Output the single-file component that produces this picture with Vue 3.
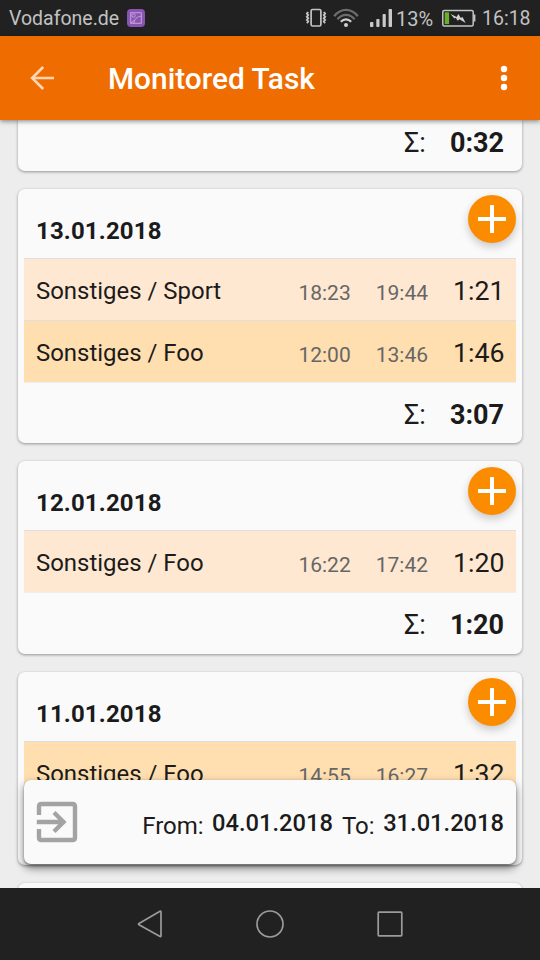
<script setup>
const days = [
  {
    date: '13.01.2018',
    total: '3:07',
    entries: [
      { name: 'Sonstiges / Sport', start: '18:23', end: '19:44', duration: '1:21', tone: 'peach' },
      { name: 'Sonstiges / Foo', start: '12:00', end: '13:46', duration: '1:46', tone: 'amber' }
    ]
  },
  {
    date: '12.01.2018',
    total: '1:20',
    entries: [
      { name: 'Sonstiges / Foo', start: '16:22', end: '17:42', duration: '1:20', tone: 'peach' }
    ]
  },
  {
    date: '11.01.2018',
    total: null,
    entries: [
      { name: 'Sonstiges / Foo', start: '14:55', end: '16:27', duration: '1:32', tone: 'amber' }
    ]
  }
]
</script>

<template>
  <div class="screen">
    <header class="status">
      <span class="carrier">Vodafone.de</span>
      <svg class="note" width="18" height="18" viewBox="0 0 18 18">
        <rect width="18" height="18" rx="4" fill="#8a54b4" />
        <g fill="none" stroke="#c3a5d8" stroke-width="1">
          <rect x="3.7" y="3.7" width="10.6" height="10.6" />
          <circle cx="6.5" cy="6.5" r="1.7" />
          <path d="M4 13.8 8 11M7 14c.5-4 3-6.5 7-6.7" />
        </g>
      </svg>
      <svg class="vibrate" width="22" height="20" viewBox="0 0 22 20" fill="none" stroke="#c4c4c4">
        <rect x="6.1" y="1.5" width="9.8" height="16.5" rx="1.5" stroke-width="1.7" />
        <path d="M3.2 4 1.9 5.5l1.3 1.6-1.3 1.6 1.3 1.6-1.3 1.6 1.3 1.6-1.3 1.6M18.8 4l1.3 1.5-1.3 1.6 1.3 1.6-1.3 1.6 1.3 1.6-1.3 1.6 1.3 1.6" stroke-width="1.9" />
      </svg>
      <svg class="wifi" width="26" height="20" viewBox="0 0 26 20" fill="none" stroke-width="2.2">
        <path d="M1.2 8.2C8-.2 18-.2 24.8 8.2" stroke="#6d6d6d" />
        <path d="M4.4 11.2c5-5.8 12.2-5.8 17.2 0" stroke="#6d6d6d" />
        <path d="M7.8 13.8c3.2-3.3 7.2-3.3 10.4 0" stroke="#d0d0d0" />
        <circle cx="13" cy="17" r="2" fill="#d0d0d0" />
      </svg>
      <svg class="signal" width="22" height="20" viewBox="0 0 22 20" fill="#c9c9c9">
        <rect y="14" width="3.4" height="5" rx=".8" />
        <rect x="6.3" y="11" width="3.2" height="8" rx=".8" />
        <rect x="12.6" y="6" width="3.2" height="13" rx=".8" />
        <rect x="18.6" y="1" width="3.4" height="18" rx=".8" />
      </svg>
      <span class="percent">13%</span>
      <svg class="battery" width="34" height="18" viewBox="0 0 34 18">
        <rect x=".8" y="1.4" width="30.4" height="15.6" rx="1.5" fill="none" stroke="#c4c4c4" stroke-width="1.5" />
        <path d="M32 5.500h1.400v7H32z" fill="#c4c4c4" />
        <rect x="2.7" y="3.3" width="4.4" height="11.8" fill="#6aae29" />
        <path d="M8.500 4.700 14.600 8l1.800-3.100 2.400 4 1.700-.8 3.200 5.900-6.300-3.800-1.700 1.600-1.900-3-1.500.7z" fill="#d0d0d0" />
      </svg>
      <span class="clock">16:18</span>
    </header>

    <nav class="toolbar">
      <svg width="24" height="24" viewBox="0 0 24 24" fill="none" stroke="#ffd5b3" stroke-width="2.6">
        <path d="M13.200 1 2.100 12l11.100 11M2.100 12H24" />
      </svg>
      <h1>Monitored Task</h1>
      <svg width="8" height="26" viewBox="0 0 8 26" fill="#fff">
        <circle cx="4" cy="4" r="3.2" /><circle cx="4" cy="13" r="3.2" /><circle cx="4" cy="22" r="3.2" />
      </svg>
    </nav>

    <main class="content">
      <section class="card">
        <div class="sum first"><span>Σ:</span><b>0:32</b></div>
      </section>
      <section v-for="day in days" :key="day.date" class="card">
        <h2>{{ day.date }}</h2>
        <button class="add" aria-label="Add">
          <svg width="28" height="28" viewBox="0 0 28 28" fill="#fff">
            <rect x="12" width="4" height="28" rx=".5" /><rect y="12" width="28" height="4" rx=".5" />
          </svg>
        </button>
        <div v-for="entry in day.entries" :key="entry.start" class="entry" :class="entry.tone">
          <span class="name">{{ entry.name }}</span>
          <span class="time">{{ entry.start }}</span>
          <span class="time">{{ entry.end }}</span>
          <span class="duration">{{ entry.duration }}</span>
        </div>
        <div class="sum">
          <template v-if="day.total"><span>Σ:</span><b>{{ day.total }}</b></template>
        </div>
      </section>
      <section class="card last"></section>

      <div class="range">
        <svg class="exit" width="42" height="42" viewBox="0 0 42 42" fill="none" stroke="#a3a3a3" stroke-width="4.4">
          <path d="M3 14V5.500Q3 3 5.500 3h31Q39 3 39 5.500v31q0 2.500-2.500 2.500h-31Q3 39 3 36.500V28" />
          <path d="M.8 21H28M18 11.500 27.500 21 18 30.500" />
        </svg>
        <span class="label">From:</span>
        <span class="day">04.01.2018</span>
        <span class="label to">To:</span>
        <span class="day">31.01.2018</span>
      </div>
    </main>

    <footer class="keys">
      <svg width="28" height="28" viewBox="0 0 28 28"><path d="M25 1.800V26q0 .9-.9.4L3 14.700q-1-.6 0-1.200L24 1.300q1-.5 1 .5z" /></svg>
      <svg width="28" height="28" viewBox="0 0 28 28"><circle cx="14" cy="14" r="13" /></svg>
      <svg width="28" height="28" viewBox="0 0 28 28"><rect x="2.2" y="2.2" width="23.6" height="23.6" rx=".8" /></svg>
    </footer>
  </div>
</template>

<style>
body {
  margin: 0;
}
</style>

<style scoped>
.screen {
  display: flex;
  flex-direction: column;
  width: 540px;
  height: 960px;
  overflow: hidden;
  background: #ededed;
  color: #1b1b1b;
  font-family: Roboto, sans-serif;
}
.screen svg {
  display: block;
  flex: none;
}
.status {
  display: flex;
  align-items: center;
  height: 36px;
  flex: none;
  box-sizing: border-box;
  padding-left: 9px;
  background: #212121;
  color: #c2c2c2;
  font-size: 19.5px;
  line-height: 24px;
  white-space: nowrap;
}
.status span {
  flex: none;
  padding-top: 2px;
}
.carrier {
  width: 118px;
}
.vibrate {
  margin-left: 160px;
}
.wifi {
  margin-left: 6px;
}
.signal {
  margin-left: 11px;
}
.percent {
  width: 46px;
  margin-left: 4px;
  font-size: 20px;
}
.battery {
  margin-left: 0;
}
.clock {
  margin-left: 6px;
}
.toolbar {
  position: relative;
  z-index: 2;
  display: flex;
  align-items: center;
  flex: none;
  box-sizing: border-box;
  height: 84px;
  padding: 0 32px 0 30px;
  background: #ef6c00;
  box-shadow: 0 1px 5px rgba(0, 0, 0, 0.5);
}
h1 {
  flex: 1;
  margin: 1px 0 0 54px;
  color: #fff;
  font-size: 29.85px;
  line-height: 36px;
  font-weight: 500;
}
.content {
  position: relative;
  flex: 1;
  min-height: 0;
  overflow: hidden;
  display: flex;
  flex-direction: column;
  gap: 18px;
  padding: 0 18px;
}
.card {
  position: relative;
  flex: none;
  padding: 0 6px;
  border-radius: 7px;
  background: #fafafa;
  box-shadow: 0 1px 3px rgba(0, 0, 0, 0.38);
}
.card:first-child {
  border-radius: 0 0 7px 7px;
}
.card.last {
  height: 40px;
}
h2 {
  height: 69px;
  margin: 0;
  padding: 0 12px;
  font-size: 24px;
  letter-spacing: 0.15px;
  line-height: 84px;
  font-weight: 700;
}
.add {
  position: absolute;
  top: 6px;
  right: 6px;
  display: grid;
  place-items: center;
  width: 48px;
  height: 48px;
  padding: 0;
  border: 0;
  border-radius: 50%;
  background: #fb8c00;
  box-shadow: 0 4px 8px rgba(0, 0, 0, 0.2);
}
.entry {
  display: flex;
  height: 62px;
  box-sizing: border-box;
  padding: 0 12px;
  border-top: 1px solid #dedede;
  line-height: 64px;
}
.peach {
  background: #ffe8d1;
}
.amber {
  background: #ffdfb0;
}
.name {
  flex: 1;
  font-size: 23.95px;
}
.time {
  margin-right: 25px;
  color: #666;
  font-size: 21px;
  line-height: 68px;
}
.duration {
  width: 51px;
  font-size: 26.7px;
}
.sum {
  display: flex;
  justify-content: flex-end;
  gap: 24px;
  height: 62px;
  box-sizing: border-box;
  padding-right: 12px;
  border-top: 1px solid #eee;
  font-size: 27px;
  line-height: 64px;
}
.card:nth-child(2) .sum {
  height: 61px;
}
.sum b {
  font-weight: 700;
}
.sum.first {
  height: 51px;
  border-top: 0;
  line-height: 46px;
}
.range {
  position: absolute;
  left: 24px;
  right: 24px;
  bottom: 24px;
  display: flex;
  align-items: center;
  height: 84px;
  box-sizing: border-box;
  padding: 0 12px;
  border-radius: 7px;
  background: #fafafa;
  box-shadow: 0 4px 8px rgba(0, 0, 0, 0.5), 0 1px 2px rgba(0, 0, 0, 0.3);
  font-size: 23.7px;
  line-height: 30px;
}
.exit {
  margin-right: auto;
}
.label {
  padding-top: 8px;
  font-size: 24px;
}
.day {
  margin-left: 8.5px;
  padding-top: 2px;
  font-weight: 500;
}
.to {
  margin-left: 9px;
}
.keys {
  position: relative;
  display: flex;
  align-items: center;
  justify-content: center;
  gap: 92px;
  flex: none;
  height: 72px;
  background: #212121;
}
.keys svg {
  fill: none;
  stroke: #9b9b9b;
  stroke-width: 1.7;
}
</style>
